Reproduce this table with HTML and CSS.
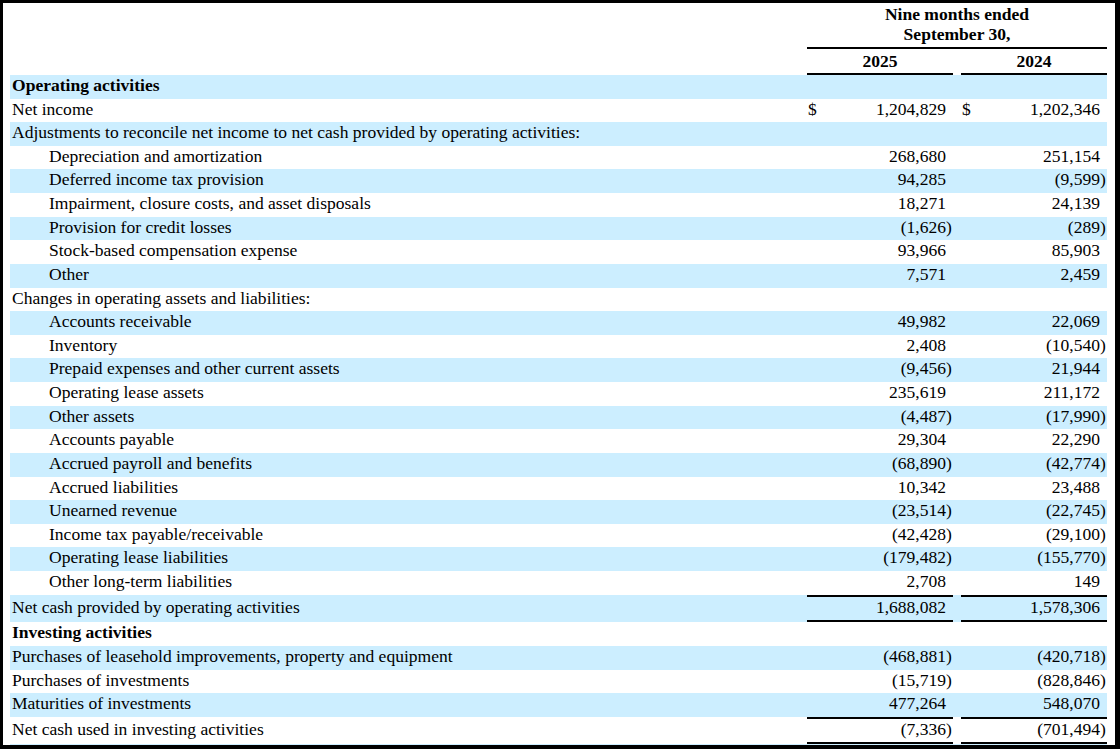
FILE: index.html
```html
<!DOCTYPE html>
<html lang="en">
<head>
<meta charset="utf-8">
<title>Condensed Consolidated Statements of Cash Flows</title>
<link rel="stylesheet" href="styles.css">
</head>
<body>
<div class="sheet">
  <table class="cf">
    <colgroup>
      <col class="c-label">
      <col class="c-cur">
      <col class="c-num">
      <col class="c-par">
      <col class="c-gap">
      <col class="c-cur">
      <col class="c-num">
      <col class="c-par">
    </colgroup>
    <thead>
      <tr class="h1">
        <th></th>
        <th colspan="7" class="period"><span class="pl">Nine months ended</span><span class="pl">September 30,</span></th>
      </tr>
      <tr class="h2">
        <th></th>
        <th colspan="3" class="year">2025</th>
        <th></th>
        <th colspan="3" class="year">2024</th>
      </tr>
    </thead>
    <tbody>
      <tr class="alt sec"><td class="lbl">Operating activities</td><td colspan="7"></td></tr>
      <tr><td class="lbl">Net income</td><td class="cur">$</td><td class="num">1,204,829</td><td class="par"></td><td></td><td class="cur">$</td><td class="num">1,202,346</td><td class="par"></td></tr>
      <tr class="alt"><td class="lbl">Adjustments to reconcile net income to net cash provided by operating activities:</td><td colspan="7"></td></tr>
      <tr><td class="lbl ind">Depreciation and amortization</td><td class="cur"></td><td class="num">268,680</td><td class="par"></td><td></td><td class="cur"></td><td class="num">251,154</td><td class="par"></td></tr>
      <tr class="alt"><td class="lbl ind">Deferred income tax provision</td><td class="cur"></td><td class="num">94,285</td><td class="par"></td><td></td><td class="cur"></td><td class="num">(9,599</td><td class="par">)</td></tr>
      <tr><td class="lbl ind">Impairment, closure costs, and asset disposals</td><td class="cur"></td><td class="num">18,271</td><td class="par"></td><td></td><td class="cur"></td><td class="num">24,139</td><td class="par"></td></tr>
      <tr class="alt"><td class="lbl ind">Provision for credit losses</td><td class="cur"></td><td class="num">(1,626</td><td class="par">)</td><td></td><td class="cur"></td><td class="num">(289</td><td class="par">)</td></tr>
      <tr><td class="lbl ind">Stock-based compensation expense</td><td class="cur"></td><td class="num">93,966</td><td class="par"></td><td></td><td class="cur"></td><td class="num">85,903</td><td class="par"></td></tr>
      <tr class="alt"><td class="lbl ind">Other</td><td class="cur"></td><td class="num">7,571</td><td class="par"></td><td></td><td class="cur"></td><td class="num">2,459</td><td class="par"></td></tr>
      <tr><td class="lbl">Changes in operating assets and liabilities:</td><td colspan="7"></td></tr>
      <tr class="alt"><td class="lbl ind">Accounts receivable</td><td class="cur"></td><td class="num">49,982</td><td class="par"></td><td></td><td class="cur"></td><td class="num">22,069</td><td class="par"></td></tr>
      <tr><td class="lbl ind">Inventory</td><td class="cur"></td><td class="num">2,408</td><td class="par"></td><td></td><td class="cur"></td><td class="num">(10,540</td><td class="par">)</td></tr>
      <tr class="alt"><td class="lbl ind">Prepaid expenses and other current assets</td><td class="cur"></td><td class="num">(9,456</td><td class="par">)</td><td></td><td class="cur"></td><td class="num">21,944</td><td class="par"></td></tr>
      <tr><td class="lbl ind">Operating lease assets</td><td class="cur"></td><td class="num">235,619</td><td class="par"></td><td></td><td class="cur"></td><td class="num">211,172</td><td class="par"></td></tr>
      <tr class="alt"><td class="lbl ind">Other assets</td><td class="cur"></td><td class="num">(4,487</td><td class="par">)</td><td></td><td class="cur"></td><td class="num">(17,990</td><td class="par">)</td></tr>
      <tr><td class="lbl ind">Accounts payable</td><td class="cur"></td><td class="num">29,304</td><td class="par"></td><td></td><td class="cur"></td><td class="num">22,290</td><td class="par"></td></tr>
      <tr class="alt"><td class="lbl ind">Accrued payroll and benefits</td><td class="cur"></td><td class="num">(68,890</td><td class="par">)</td><td></td><td class="cur"></td><td class="num">(42,774</td><td class="par">)</td></tr>
      <tr><td class="lbl ind">Accrued liabilities</td><td class="cur"></td><td class="num">10,342</td><td class="par"></td><td></td><td class="cur"></td><td class="num">23,488</td><td class="par"></td></tr>
      <tr class="alt"><td class="lbl ind">Unearned revenue</td><td class="cur"></td><td class="num">(23,514</td><td class="par">)</td><td></td><td class="cur"></td><td class="num">(22,745</td><td class="par">)</td></tr>
      <tr><td class="lbl ind">Income tax payable/receivable</td><td class="cur"></td><td class="num">(42,428</td><td class="par">)</td><td></td><td class="cur"></td><td class="num">(29,100</td><td class="par">)</td></tr>
      <tr class="alt"><td class="lbl ind">Operating lease liabilities</td><td class="cur"></td><td class="num">(179,482</td><td class="par">)</td><td></td><td class="cur"></td><td class="num">(155,770</td><td class="par">)</td></tr>
      <tr><td class="lbl ind">Other long-term liabilities</td><td class="cur"></td><td class="num">2,708</td><td class="par"></td><td></td><td class="cur"></td><td class="num">149</td><td class="par"></td></tr>
      <tr class="alt tot"><td class="lbl">Net cash provided by operating activities</td><td class="cur"></td><td class="num">1,688,082</td><td class="par"></td><td></td><td class="cur"></td><td class="num">1,578,306</td><td class="par"></td></tr>
      <tr class="sec"><td class="lbl">Investing activities</td><td colspan="7"></td></tr>
      <tr class="alt"><td class="lbl">Purchases of leasehold improvements, property and equipment</td><td class="cur"></td><td class="num">(468,881</td><td class="par">)</td><td></td><td class="cur"></td><td class="num">(420,718</td><td class="par">)</td></tr>
      <tr><td class="lbl">Purchases of investments</td><td class="cur"></td><td class="num">(15,719</td><td class="par">)</td><td></td><td class="cur"></td><td class="num">(828,846</td><td class="par">)</td></tr>
      <tr class="alt"><td class="lbl">Maturities of investments</td><td class="cur"></td><td class="num">477,264</td><td class="par"></td><td></td><td class="cur"></td><td class="num">548,070</td><td class="par"></td></tr>
      <tr class="tot"><td class="lbl">Net cash used in investing activities</td><td class="cur"></td><td class="num">(7,336</td><td class="par">)</td><td></td><td class="cur"></td><td class="num">(701,494</td><td class="par">)</td></tr>
      <tr class="alt"><td class="lbl" colspan="8">&nbsp;</td></tr>
    </tbody>
  </table>
</div>
</body>
</html>
```
FILE: styles.css
```css
html, body {
  margin: 0;
  padding: 0;
  background: #ffffff;
}

.sheet {
  width: 1120px;
  height: 749px;
  box-sizing: border-box;
  border-style: solid;
  border-color: #000000;
  border-width: 3px 5px 4px 3px;
  padding: 0 8px 0 7px;
  overflow: hidden;
  font-family: "Liberation Serif", "Times New Roman", serif;
  font-size: 17.55px;
  color: #000000;
}

.cf {
  width: 1097px;
  table-layout: fixed;
  border-collapse: separate;
  border-spacing: 0;
}

.c-label { width: 797px; }
.c-cur { width: 20px; }
.c-num { width: 119px; }
.c-par { width: 7px; }
.c-gap { width: 8px; }

.cf th {
  padding: 0;
  font-weight: bold;
  text-align: center;
}

.cf th.period {
  padding: 2px 0 3px;
  border-bottom: 2px solid #000000;
}

.pl {
  display: block;
  height: 19.5px;
  line-height: 19.5px;
}

.cf th.year {
  line-height: 21px;
  padding: 2.3px 0 0.7px;
  border-bottom: 2px solid #000000;
}

.cf td {
  padding: 0 0 2.64px 0;
  line-height: 21px;
  white-space: nowrap;
  vertical-align: middle;
}

.alt {
  background: #cceeff;
}

.cf td.lbl {
  padding-left: 2px;
}

.cf td.ind {
  padding-left: 39px;
}

.sec .lbl {
  font-weight: bold;
}

.cf td.cur {
  padding-left: 1px;
  text-align: left;
}

.num {
  text-align: right;
}

.par {
  text-align: left;
}

.tot .cur,
.tot .num,
.tot .par {
  border-top: 2px solid #000000;
  border-bottom: 2px solid #000000;
}
```
